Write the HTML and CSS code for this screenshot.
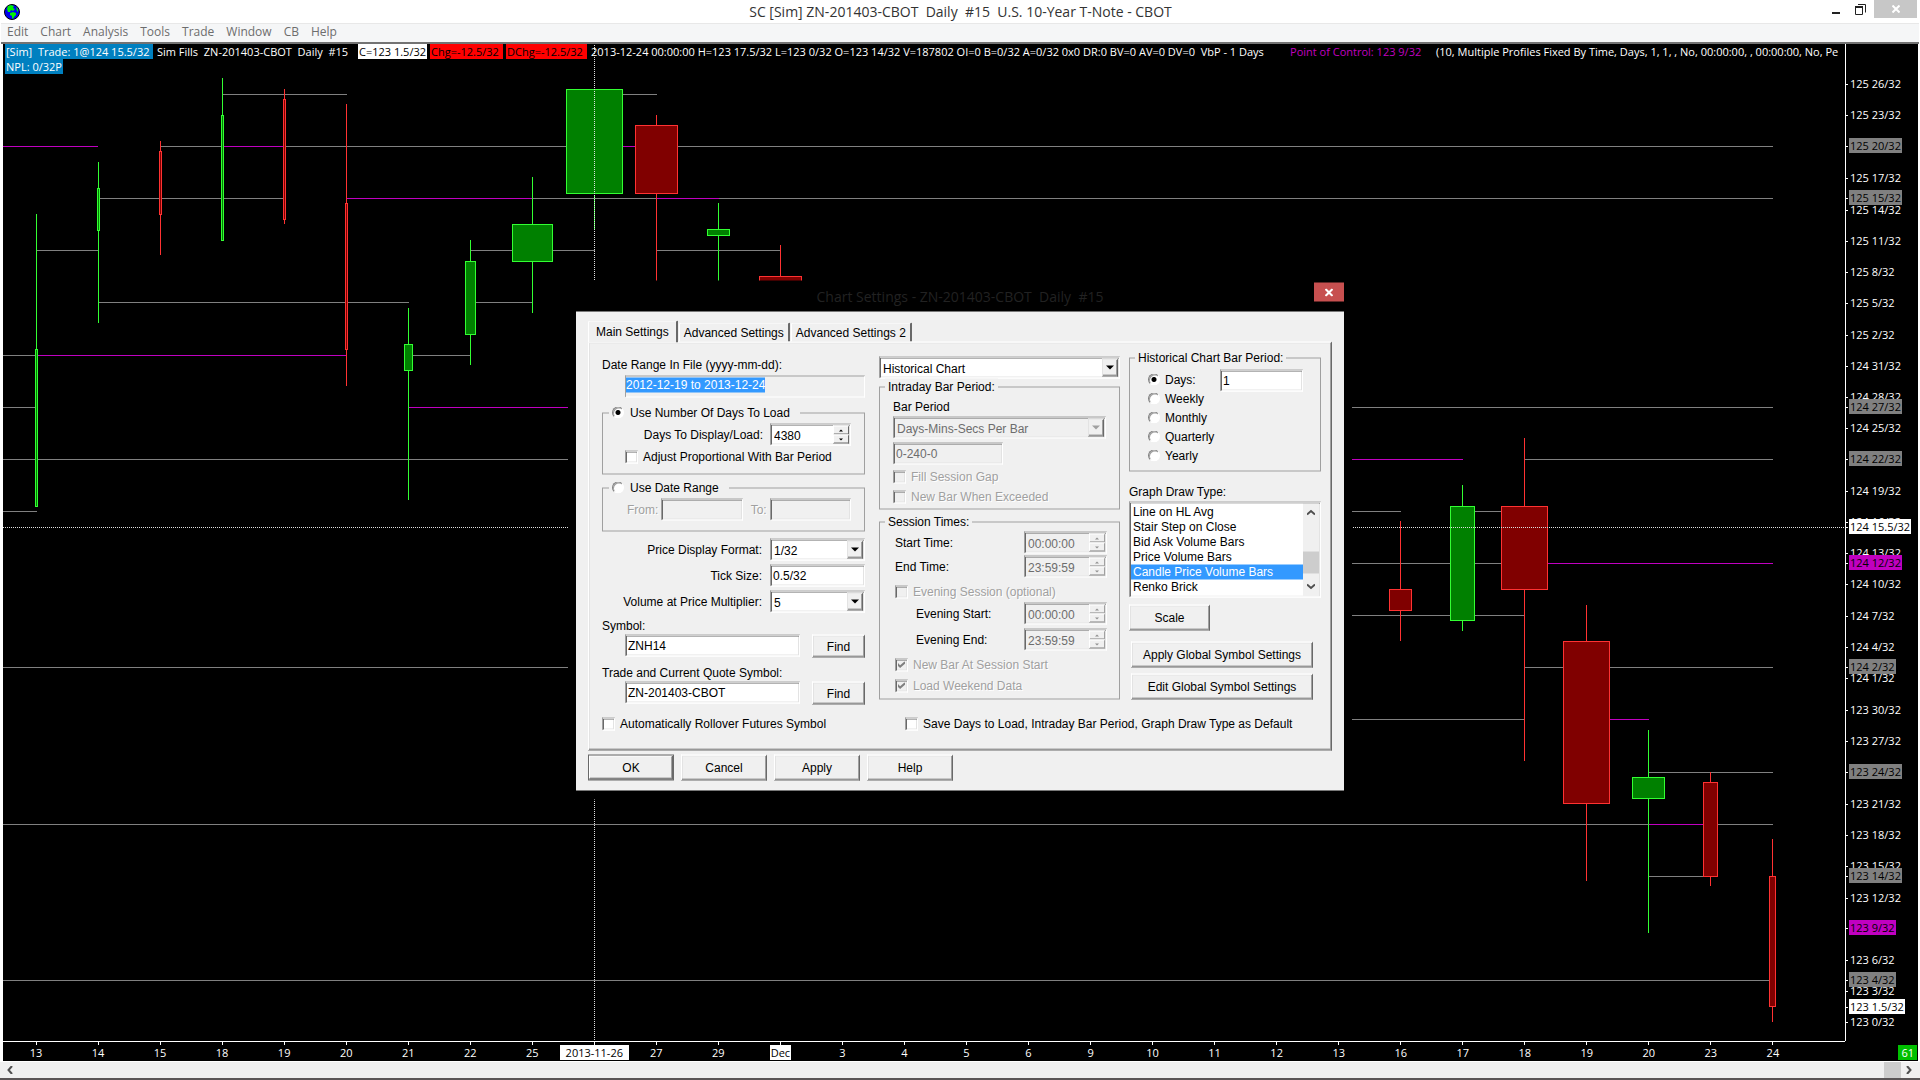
FILE: index.html
```html
<!DOCTYPE html>
<html lang="en">
    <head>
        <title>SC [Sim] ZN-201403-CBOT Daily #15</title>
        <meta charset="UTF-8">
        <meta name="viewport" content="width=device-width, initial-scale=1.0">
        <link rel="stylesheet" href="styles.css">
    </head>

    <body>
        <header class="titlebar">
            <svg class="globe" viewBox="0 0 16 16">
                <circle cx="8" cy="8" r="7.5" fill="#0000f0" stroke="#000"/>
                <path d="M4 2L7 1L10 2L9 4L11 5L9 7L7 6L6 8L4 8L3 5ZM6 9L9 8L12 9L12 11L10 13L9 15L8 14L8 12L6 11Z" fill="#00f000"/>
                <path d="M12 3L14 5L14 8L13 7Z" fill="#00f000"/>
            </svg>
            <h1>SC [Sim] ZN-201403-CBOT&nbsp; Daily&nbsp; #15&nbsp; U.S. 10-Year T-Note - CBOT</h1>
            <div class="winbtns">
                <button aria-label="Minimize"><svg width="8" height="11"><path d="M0 9H8" stroke="#222" stroke-width="2"/></svg></button>
                <button aria-label="Restore"><svg width="11" height="11"><path d="M3 .5H10.500V8.500M.5 3V10.500H7.500V3" fill="none" stroke="#222"/><path d="M0 3H8" stroke="#222" stroke-width="2"/></svg></button>
                <button class="winclose" aria-label="Close"><svg width="8" height="8"><path d="M.5 .5L7.500 7.500M7.500 .5L.5 7.500" stroke="#fff" stroke-width="2"/></svg></button>
            </div>
        </header>

        <nav class="menubar">
            <a href="#">Edit</a><a href="#">Chart</a><a href="#">Analysis</a><a href="#">Tools</a><a href="#">Trade</a><a href="#">Window</a><a href="#">CB</a><a href="#">Help</a>
        </nav>

        <main class="chart">
            <div class="plot">
                <svg viewBox="3 44 1842 997" preserveAspectRatio="none" shape-rendering="crispEdges">
                    <g transform="translate(.5 .5)" fill="none">
                        <!-- volume at price levels -->
                        <path stroke="#808080" d="M222 94H346M594 94H656M160 146H222M284 146H594M656 146H1772M98 198H284M532 198H656M718 198H1772M36 250H98M470 250H594M656 250H780M98 302H408M470 302H532M2 355H36M408 355H470M2 407H36M1300 407H1772M2 459H600M1524 459H1772M2 511H36M1300 511H1400M1462 511H1524M1300 563H1524M1300 615H1524M2 667H600M1524 667H1772M1300 719H1524M1648 772H1772M2 824H1648M1710 824H1772M1648 876H1703M2 980H1772"/>
                        <path stroke="#c000c0" d="M2 146H97M222 146H284M600 146H656M346 198H532M656 198H718M36 355H346M408 407H600M1300 459H1462M1524 563H1772M1586 719H1648M1648 824H1710"/>
                        <!-- wicks -->
                        <path stroke="#32ff32" d="M36 213V349M98 161V322M222 77V115M408 307V499M470 239V364M532 176V312M594 194V229M718 202V290M1462 484V630M1648 729V932"/>
                        <path stroke="#ff3232" d="M160 140V254M284 88V223M346 103V385M656 114V290M780 244V290M1400 520V640M1524 437V760M1586 604V880M1710 771V885M1772 838V1021"/>
                        <!-- bodies -->
                        <g fill="#008000" stroke="#32ff32">
                            <path d="M35 349h2v157h-2zM97 188h2v42h-2zM221 115h2v125h-2zM404 344h8v26h-8zM465 261h10v73h-10zM512 224h40v37h-40zM566 89h56v104h-56zM707 229h22v6h-22zM1450 506h24v114h-24zM1632 777h32v21h-32z"/>
                        </g>
                        <g fill="#800000" stroke="#ff3232">
                            <path d="M159 151h2v63h-2zM283 99h2v120h-2zM345 203h2v146h-2zM635 125h42v68h-42zM759 276h42v20h-42zM1389 589h22v21h-22zM1501 506h46v83h-46zM1563 641h46v162h-46zM1703 782h14v94h-14zM1769 876h6v130h-6z"/>
                        </g>
                    </g>
                    <!-- crosshair -->
                    <path stroke="#e0e0e0" stroke-dasharray="1 1" d="M3 527.5H1845M594.5 45V1041"/>
                </svg>
                <div class="status">
                    <p><span class="sim trade">[Sim]&nbsp; Trade: 1@124 15.5/32</span><span class="name">Sim Fills&nbsp; ZN-201403-CBOT&nbsp; Daily&nbsp; #15</span><span class="last">C=123 1.5/32</span><span class="neg">Chg=-12.5/32</span><span class="neg day">DChg=-12.5/32</span><span class="bar">2013-12-24 00:00:00 H=123 17.5/32 L=123 0/32 O=123 14/32 V=187802 OI=0 B=0/32 A=0/32 0x0 DR:0 BV=0 AV=0 DV=0&nbsp; VbP - 1 Days</span><span class="poc">Point of Control: 123 9/32</span><span>(10, Multiple Profiles Fixed By Time, Days, 1, 1, , No, 00:00:00, , 00:00:00, No, Pe</span></p>
                    <p><span class="sim">NPL: 0/32P</span></p>
                </div>
            </div>

            <div class="prices">
                <span style="top:4.01%">125 26/32</span>
                <span style="top:7.17%">125 23/32</span>
                <span style="top:13.44%">125 17/32</span>
                <span style="top:16.6%">125 14/32</span>
                <span style="top:19.76%">125 11/32</span>
                <span style="top:22.87%">125 8/32</span>
                <span style="top:25.98%">125 5/32</span>
                <span style="top:29.19%">125 2/32</span>
                <span style="top:32.3%">124 31/32</span>
                <span style="top:35.41%">124 28/32</span>
                <span style="top:38.52%">124 25/32</span>
                <span style="top:44.83%">124 19/32</span>
                <span style="top:47.94%">124 16/32</span>
                <span style="top:51.1%">124 13/32</span>
                <span style="top:54.21%">124 10/32</span>
                <span style="top:57.37%">124 7/32</span>
                <span style="top:60.48%">124 4/32</span>
                <span style="top:63.64%">124 1/32</span>
                <span style="top:66.8%">123 30/32</span>
                <span style="top:69.91%">123 27/32</span>
                <span style="top:76.18%">123 21/32</span>
                <span style="top:79.29%">123 18/32</span>
                <span style="top:82.45%">123 15/32</span>
                <span style="top:85.61%">123 12/32</span>
                <span style="top:91.88%">123 6/32</span>
                <span style="top:94.98%">123 3/32</span>
                <span style="top:98.14%">123 0/32</span>
                <span class="level" style="top:10.23%">125 20/32</span>
                <span class="level" style="top:15.45%">125 15/32</span>
                <span class="level" style="top:36.41%">124 27/32</span>
                <span class="level" style="top:41.62%">124 22/32</span>
                <span class="level control" style="top:52.06%">124 12/32</span>
                <span class="level" style="top:62.49%">124 2/32</span>
                <span class="level" style="top:73.02%">123 24/32</span>
                <span class="level" style="top:83.45%">123 14/32</span>
                <span class="level control" style="top:88.67%">123 9/32</span>
                <span class="level" style="top:93.88%">123 4/32</span>
                <span class="level current" style="top:96.54%">123 1.5/32</span>
                <span class="level current" style="top:48.45%">124 15.5/32</span>
            </div>

            <div class="dates">
                <span>13</span><span>14</span><span>15</span><span>18</span><span>19</span><span>20</span><span>21</span><span>22</span><span>25</span><span><b class="cursor">2013-11-26</b></span><span>27</span><span>29</span><span><b>Dec</b></span><span>3</span><span>4</span><span>5</span><span>6</span><span>9</span><span>10</span><span>11</span><span>12</span><span>13</span><span>16</span><span>17</span><span>18</span><span>19</span><span>20</span><span>23</span><span>24</span>
            </div>
            <div class="corner"><span>61</span></div>
        </main>

        <div class="scroll">
            <svg width="6" height="8"><path d="M5 0L1.500 4L5 8" fill="none" stroke="#505050" stroke-width="2"/></svg>
            <div class="thumb"></div>
            <svg width="6" height="8"><path d="M1 0L4.500 4L1 8" fill="none" stroke="#505050" stroke-width="2"/></svg>
        </div>
        <div class="edge"></div>

        <section class="dialog" role="dialog" aria-labelledby="dlgtitle">
            <div class="dlghead">
                <h2 id="dlgtitle">Chart Settings - ZN-201403-CBOT&nbsp; Daily&nbsp; #15</h2>
                <button class="dlgclose" aria-label="Close"><svg width="8" height="8"><path d="M.5 .5L7.500 7.500M7.500 .5L.5 7.500" stroke="#fff" stroke-width="2"/></svg></button>
            </div>
            <form class="dlgbody">
                <div class="tabs">
                    <button type="button" class="tab active">Main Settings</button>
                    <button type="button" class="tab">Advanced Settings</button>
                    <button type="button" class="tab">Advanced Settings 2</button>
                </div>
                <div class="panel">
                    <div class="col col1">
                        <label id="rangelabel">Date Range In File (yyyy-mm-dd):</label>
                        <div class="rangebox" role="textbox" aria-readonly="true" aria-labelledby="rangelabel" tabindex="0"><mark>2012-12-19 to 2013-12-24</mark></div>

                        <fieldset class="load">
                            <legend><input type="radio" name="load" id="byDays" checked><label for="byDays">Use Number Of Days To Load</label></legend>
                            <div class="row">
                                <label for="days">Days To Display/Load:</label>
                                <span class="spin"><input type="text" id="days" value="4380"><span class="arrows"><i></i><i></i></span></span>
                            </div>
                            <div class="check"><input type="checkbox" id="adjust"><label for="adjust">Adjust Proportional With Bar Period</label></div>
                        </fieldset>

                        <fieldset class="dates-set">
                            <legend><input type="radio" name="load" id="byRange"><label for="byRange">Use Date Range</label></legend>
                            <div class="row">
                                <label class="off" for="from">From:</label><input type="text" class="field" id="from" disabled>
                                <label class="off to" for="to">To:</label><input type="text" class="field" id="to" disabled>
                            </div>
                        </fieldset>

                        <div class="formats">
                            <label for="format">Price Display Format:</label>
                            <span class="combo"><select id="format"><option>1/32</option></select><span class="drop"></span></span>
                            <label for="tick">Tick Size:</label>
                            <input type="text" class="field" id="tick" value="0.5/32">
                            <label for="mult">Volume at Price Multiplier:</label>
                            <span class="combo"><select id="mult"><option>5</option></select><span class="drop"></span></span>
                        </div>

                        <label for="symbol">Symbol:</label>
                        <div class="find"><input type="text" class="field" id="symbol" value="ZNH14"><button type="button" class="btn">Find</button></div>
                        <label class="second" for="quote">Trade and Current Quote Symbol:</label>
                        <div class="find"><input type="text" class="field" id="quote" value="ZN-201403-CBOT"><button type="button" class="btn">Find</button></div>
                    </div>

                    <div class="col col2">
                        <span class="combo"><select aria-label="Chart type"><option>Historical Chart</option></select><span class="drop"></span></span>

                        <fieldset class="intraday">
                            <legend>Intraday Bar Period:</legend>
                            <label for="period">Bar Period</label>
                            <span class="combo"><select id="period" disabled><option>Days-Mins-Secs Per Bar</option></select><span class="drop"></span></span>
                            <input type="text" class="field" aria-label="Bar period value" value="0-240-0" disabled>
                            <div class="check off"><input type="checkbox" id="gap" disabled><label for="gap">Fill Session Gap</label></div>
                            <div class="check off"><input type="checkbox" id="exceed" disabled><label for="exceed">New Bar When Exceeded</label></div>
                        </fieldset>

                        <fieldset class="session">
                            <legend>Session Times:</legend>
                            <div class="row"><label for="start">Start Time:</label><span class="spin"><input type="text" id="start" value="00:00:00" disabled><span class="arrows"><i></i><i></i></span></span></div>
                            <div class="row"><label for="end">End Time:</label><span class="spin"><input type="text" id="end" value="23:59:59" disabled><span class="arrows"><i></i><i></i></span></span></div>
                            <div class="check off"><input type="checkbox" id="evening" disabled><label for="evening">Evening Session (optional)</label></div>
                            <div class="row sub"><label for="estart">Evening Start:</label><span class="spin"><input type="text" id="estart" value="00:00:00" disabled><span class="arrows"><i></i><i></i></span></span></div>
                            <div class="row sub"><label for="eend">Evening End:</label><span class="spin"><input type="text" id="eend" value="23:59:59" disabled><span class="arrows"><i></i><i></i></span></span></div>
                            <div class="check off"><input type="checkbox" id="newbar" checked disabled><label for="newbar">New Bar At Session Start</label></div>
                            <div class="check off"><input type="checkbox" id="weekend" checked disabled><label for="weekend">Load Weekend Data</label></div>
                        </fieldset>
                    </div>

                    <div class="col col3">
                        <fieldset class="hist">
                            <legend>Historical Chart Bar Period:</legend>
                            <div class="period">
                                <div>
                                    <div class="check"><input type="radio" name="bar" id="pd" checked><label for="pd">Days:</label></div>
                                    <div class="check"><input type="radio" name="bar" id="pw"><label for="pw">Weekly</label></div>
                                    <div class="check"><input type="radio" name="bar" id="pm"><label for="pm">Monthly</label></div>
                                    <div class="check"><input type="radio" name="bar" id="pq"><label for="pq">Quarterly</label></div>
                                    <div class="check"><input type="radio" name="bar" id="py"><label for="py">Yearly</label></div>
                                </div>
                                <input type="text" class="field" aria-label="Number of days" value="1">
                            </div>
                        </fieldset>

                        <label for="draw">Graph Draw Type:</label>
                        <div class="list">
                            <select id="draw" size="6">
                                <option>Line on HL Avg</option>
                                <option>Stair Step on Close</option>
                                <option>Bid Ask Volume Bars</option>
                                <option>Price Volume Bars</option>
                                <option selected>Candle Price Volume Bars</option>
                                <option>Renko Brick</option>
                            </select>
                            <div class="vbar">
                                <svg width="8" height="6"><path d="M0 5L4 1.500L8 5" fill="none" stroke="#505050" stroke-width="2"/></svg>
                                <div></div>
                                <svg width="8" height="6"><path d="M0 1L4 4.500L8 1" fill="none" stroke="#505050" stroke-width="2"/></svg>
                            </div>
                        </div>
                        <button type="button" class="btn scale">Scale</button>
                        <button type="button" class="btn global">Apply Global Symbol Settings</button>
                        <button type="button" class="btn global">Edit Global Symbol Settings</button>
                    </div>

                    <div class="bottom">
                        <div class="check"><input type="checkbox" id="roll"><label for="roll">Automatically Rollover Futures Symbol</label></div>
                        <div class="check"><input type="checkbox" id="save"><label for="save">Save Days to Load, Intraday Bar Period, Graph Draw Type as Default</label></div>
                    </div>
                </div>
                <div class="actions">
                    <button type="button" class="btn default">OK</button>
                    <button type="button" class="btn">Cancel</button>
                    <button type="button" class="btn">Apply</button>
                    <button type="button" class="btn">Help</button>
                </div>
            </form>
        </section>
    </body>
</html>
```
FILE: styles.css
```css
*{
    box-sizing: border-box;
}

body{
    margin: 0;
    height: 100vh;
    display: flex;
    flex-direction: column;
    position: relative;
    overflow: hidden;
    background-color: #fff;
    font-family: "Open Sans", "Noto Sans", sans-serif;
    font-size: 11px;
    line-height: 15px;
}

h1, h2, p{
    margin: 0;
    font-weight: normal;
}

button, input, select{
    font: inherit;
    color: inherit;
    margin: 0;
    padding: 0;
    border-radius: 0;
}

/* main window */
.titlebar{
    height: 23px;
    display: grid;
    grid-template-columns: 1fr auto 1fr;
    padding: 0 3px 0 4px;
}

.globe{
    width: 16px;
    height: 16px;
    margin-top: 4px;
}

.titlebar h1{
    font-size: 14px;
    line-height: 23px;
    color: #333;
}

.winbtns{
    display: flex;
    justify-content: flex-end;
    align-items: flex-start;
}

.winbtns button{
    width: 24px;
    height: 18px;
    border: 0;
    background: none;
    display: flex;
    align-items: center;
    justify-content: center;
}

.winbtns .winclose{
    width: 43px;
    margin-left: 2px;
    background-color: #c7c7c7;
}

.menubar{
    height: 21px;
    display: flex;
    gap: 12px;
    margin: 0 1px;
    padding-left: 6px;
    line-height: 16px;
    background-color: #f5f6f7;
    border-top: 1px solid #e8e8e8;
    border-bottom: 2px solid #737373;
}

.menubar a{
    color: #6d6d6d;
    font-size: 12px;
    text-decoration: none;
}

.chart{
    flex: 1;
    min-height: 0;
    margin: 0 2px 0 3px;
    display: grid;
    grid-template-columns: 1fr 73px;
    grid-template-rows: 1fr 20px;
    background-color: #000;
    color: #fff;
}

.plot{
    position: relative;
    min-height: 0;
    overflow: hidden;
}

.plot svg{
    display: block;
    width: 100%;
    height: 100%;
}

.status{
    position: absolute;
    top: 0;
    left: 2px;
    right: 0;
}

.status p{
    display: flex;
    gap: 3px;
    white-space: nowrap;
}

.status span{
    flex: none;
    padding: 0 1px;
}

.status .sim{
    background-color: #0080c0;
}

.status .trade{
    min-width: 148px;
}

.status .name{
    min-width: 199px;
}

.status .last{
    min-width: 69px;
    background-color: #fff;
    color: #000;
}

.status .neg{
    min-width: 73px;
    background-color: #f00;
    color: #000;
}

.status .day{
    min-width: 81px;
}

.status .bar{
    min-width: 696px;
}

.status .poc{
    min-width: 143px;
    color: #c000c0;
}

.prices{
    position: relative;
    border-left: 1px solid #fff;
}

.prices span{
    position: absolute;
    left: 3px;
    margin-top: -8px;
    padding: 0 1px;
    white-space: nowrap;
}

.prices span::before{
    content: "";
    position: absolute;
    left: -3px;
    top: 8px;
    width: 2px;
    height: 1px;
    background-color: #fff;
}

.prices .level{
    background-color: #808080;
    color: #000;
}

.prices .control{
    background-color: #c000c0;
}

.prices .current{
    background-color: #fff;
}

.dates{
    display: flex;
    border-top: 1px solid #fff;
    padding: 0 41px 0 2px;
}

.dates span{
    flex: 1 1 0;
    min-width: 0;
    display: flex;
    flex-direction: column;
    align-items: center;
    white-space: nowrap;
}

.dates span::before{
    content: "";
    width: 1px;
    height: 3px;
    background-color: #fff;
}

.dates b{
    font-weight: normal;
    color: #000;
    background-color: #fff;
    padding: 0 1px;
}

.dates .cursor{
    padding: 0 6px;
}

.corner{
    display: flex;
    justify-content: flex-end;
    padding: 4px 1px 1px 0;
}

.corner span{
    padding: 0 3px;
    background-color: #00c000;
}

.scroll{
    height: 17px;
    display: flex;
    align-items: center;
    padding: 0 8px 0 7px;
    border-top: 1px solid #fff;
    background-color: #f0f0f0;
}

.thumb{
    width: 17px;
    height: 16px;
    margin: 0 5px 0 auto;
    background-color: #cdcdcd;
}

.edge{
    height: 2px;
    background-color: #5a5556;
}

/* settings dialog */
.dialog{
    position: absolute;
    left: 50%;
    top: 50%;
    transform: translate(-50%, -50%);
    width: 784px;
    padding: 0 8px 9px;
    background-color: #000;
    color: #000;
}

.dlghead{
    height: 31px;
    display: grid;
    grid-template-columns: 1fr auto 1fr;
    align-items: start;
}

.dlghead h2{
    grid-column: 2;
    font-size: 14px;
    line-height: 31px;
    color: #222;
}

.dlgclose{
    justify-self: end;
    width: 30px;
    height: 19px;
    margin-top: 2px;
    border: 0;
    background-color: #c75050;
    display: flex;
    align-items: center;
    justify-content: center;
}

.dlgbody{
    padding: 9px 12px 10px;
    background-color: #f0f0f0;
    font-family: "Liberation Sans", Arial, sans-serif;
    font-size: 12px;
    line-height: 16px;
}

.tabs{
    display: flex;
    align-items: flex-end;
    gap: 1px;
}

.tab{
    height: 19px;
    padding: 0 4px;
    background-color: #f0f0f0;
    border: 1px solid #fff;
    border-right: 2px solid #696969;
    border-bottom: 0;
    border-top-left-radius: 2px;
}

.tab.active{
    height: 22px;
    padding: 0 7px 2px;
    margin-bottom: -1px;
    position: relative;
}

.panel{
    display: grid;
    grid-template-columns: 263px 241px 1fr;
    column-gap: 14px;
    padding: 14px 10px 18px 13px;
    border: 1px solid;
    border-color: #fff #696969 #696969 #fff;
    box-shadow: inset -1px -1px #a0a0a0, inset 1px 1px #e3e3e3;
}

.col{
    display: flex;
    flex-direction: column;
}

.col3{
    margin-left: -5px;
}

fieldset{
    margin: 0;
    padding: 0;
    min-width: 0;
    border: 1px solid #a0a0a0;
}

legend{
    height: 16px;
    margin-left: 5px;
    padding: 0 3px;
    display: flex;
    align-items: center;
    background-color: #f0f0f0;
}

.off{
    color: #a0a0a0;
    text-shadow: 1px 1px #fff;
}

.field, .combo, .spin, .rangebox, .list{
    height: 22px;
    border: 1px solid;
    border-color: #a0a0a0 #fff #fff #a0a0a0;
    box-shadow: inset 1px 1px #696969, inset -1px -1px #e3e3e3;
    background-color: #fff;
}

.field{
    width: 100%;
    padding: 0 2px;
}

.field:disabled, .combo:has(:disabled), .spin:has(:disabled){
    background-color: #f0f0f0;
    color: #6d6d6d;
}

.combo{
    display: grid;
    grid-template-columns: 1fr 16px;
    padding: 1px;
}

.combo select{
    grid-area: 1 / 1 / 2 / 3;
    appearance: none;
    border: 0;
    background: none;
    padding: 1px 0 0 2px;
    opacity: 1;
}

.drop{
    grid-area: 1 / 2 / 2 / 3;
    pointer-events: none;
    border: 1px solid;
    border-color: #e3e3e3 #696969 #696969 #e3e3e3;
    box-shadow: inset -1px -1px #a0a0a0;
    background-color: #f0f0f0;
    display: flex;
    align-items: center;
    justify-content: center;
}

.drop::before{
    content: "";
    border: 4px solid transparent;
    border-top-color: #000;
    border-bottom: 0;
}

select:disabled + .drop::before{
    border-top-color: #a0a0a0;
}

.spin{
    display: flex;
    padding: 1px;
}

.spin input{
    flex: 1;
    min-width: 0;
    border: 0;
    background: none;
    padding: 1px 0 0 2px;
}

.arrows{
    width: 16px;
    display: flex;
    flex-direction: column;
}

.arrows i{
    flex: 1;
    border: 1px solid;
    border-color: #fff #696969 #696969 #fff;
    background-color: #f0f0f0;
    display: flex;
    align-items: center;
    justify-content: center;
}

.arrows i::before{
    content: "";
    border: 2px solid transparent;
    border-bottom-color: #000;
    border-top: 0;
}

.arrows i:last-child::before{
    border: 2px solid transparent;
    border-top-color: #000;
    border-bottom: 0;
}

:disabled + .arrows i{
    border-color: #fff #a0a0a0 #808080 #fff;
}

:disabled + .arrows i::before{
    opacity: 0.4;
}

.row{
    display: flex;
    align-items: center;
}

.check{
    height: 16px;
    display: flex;
    align-items: center;
    gap: 5px;
}

input[type=checkbox]{
    appearance: none;
    width: 13px;
    height: 13px;
    border: 1px solid;
    border-color: #a0a0a0 #fff #fff #a0a0a0;
    box-shadow: inset 1px 1px #696969, inset -1px -1px #e3e3e3;
    background-color: #fff;
}

input[type=checkbox]:disabled{
    background-color: #f0f0f0;
}

input[type=checkbox]:checked::before{
    content: "";
    display: block;
    width: 7px;
    height: 7px;
    margin: 2px;
    background-color: #808080;
    clip-path: polygon(0 30%, 30% 60%, 100% 0, 100% 40%, 30% 100%, 0 70%);
}

input[type=radio]{
    appearance: none;
    width: 12px;
    height: 12px;
    border: 1px solid;
    border-color: #808080 #fff #fff #808080;
    border-radius: 50%;
    box-shadow: inset 1px 1px #a0a0a0;
    background-color: #fff;
}

input[type=radio]:checked{
    background-image: radial-gradient(circle, #000 2px, transparent 3px);
}

.btn{
    height: 26px;
    background-color: #f0f0f0;
    border: 1px solid;
    border-color: #fff #696969 #696969 #fff;
    box-shadow: inset -1px -1px #a0a0a0, inset 1px 1px #e3e3e3;
}

/* left column */
.rangebox{
    margin: 3px 0 0 23px;
    padding-top: 1px;
    background-color: #f0f0f0;
    box-shadow: none;
}

.rangebox mark{
    display: block;
    width: fit-content;
    line-height: 15px;
    color: #fff;
    background-color: #39f;
}

.load{
    margin-top: 7px;
    padding-bottom: 9px;
}

.dates-set{
    margin-top: 5px;
    padding-bottom: 10px;
}

.load legend, .dates-set legend{
    gap: 6px;
    margin-left: 6px;
    padding-right: 10px;
}

.load .row{
    justify-content: flex-end;
    gap: 7px;
    margin: 3px 13px 3px 0;
}

.load .spin{
    width: 81px;
}

.load .check{
    margin-left: 22px;
}

.dates-set .row{
    gap: 3px;
    margin: 3px 13px 0 24px;
}

.dates-set .to{
    margin-left: 5px;
}

.formats{
    display: grid;
    grid-template-columns: 1fr 95px;
    align-items: center;
    gap: 4px 8px;
    margin: 7px 0 5px;
}

.formats label{
    text-align: right;
}

.find{
    display: flex;
    gap: 12px;
    margin: 1px 0 0 23px;
}

.find .btn{
    flex: none;
    width: 53px;
    height: 23px;
}

.second{
    margin-top: 7px;
}

/* middle column */
.intraday{
    display: flex;
    flex-direction: column;
    padding: 4px 13px 4px;
}

.intraday legend{
    margin-left: -8px;
}

.intraday .combo{
    margin: 2px 0 4px;
}

.intraday .field{
    width: 110px;
}

.intraday .check{
    margin-top: 4px;
}

.session{
    display: flex;
    flex-direction: column;
    margin-top: 4px;
    padding: 2px 12px 4px 15px;
}

.session legend{
    margin-left: -10px;
}

.session .row{
    justify-content: space-between;
    margin-bottom: 2px;
}

.session .spin{
    width: 83px;
}

.session .check{
    margin: 4px 0 1px;
}

.session .sub{
    margin-top: 2px;
    padding-left: 21px;
}

/* right column */
.hist{
    margin-top: -7px;
    margin-bottom: 12px;
}

.period{
    display: flex;
    justify-content: space-between;
    align-items: flex-start;
    padding: 4px 17px 6px 18px;
}

.period .check{
    height: 19px;
}

.period .field{
    width: 83px;
}

.list{
    height: 96px;
    margin: 2px 0 7px;
    padding: 1px;
    display: grid;
    grid-template-columns: 1fr 16px;
}

.list select{
    height: 92px;
    padding-top: 1px;
    border: 0;
    outline: 0;
    overflow: hidden;
    background-color: #fff;
}

.list option{
    min-height: 15px;
    height: 15px;
    line-height: 15px;
    padding: 0 2px;
}

.list option:checked{
    color: #fff;
    background: linear-gradient(#39f, #39f);
}

.vbar{
    display: flex;
    flex-direction: column;
    align-items: center;
    padding: 6px 0;
    background-color: #f0f0f0;
}

.vbar div{
    width: 16px;
    height: 22px;
    margin: auto 0 10px;
    background-color: #cdcdcd;
}

.scale{
    width: 81px;
    margin-bottom: 11px;
}

.global{
    margin: 0 8px 6px 2px;
}

.bottom{
    grid-column: 1 / 4;
    display: flex;
    gap: 79px;
    margin-top: 10px;
}

.actions{
    display: flex;
    gap: 7px;
    margin-top: 4px;
}

.actions .btn{
    width: 86px;
}

.actions .default{
    border-color: #696969;
    box-shadow: inset -1px -1px #696969, inset 1px 1px #fff, inset -2px -2px #a0a0a0;
}
```
